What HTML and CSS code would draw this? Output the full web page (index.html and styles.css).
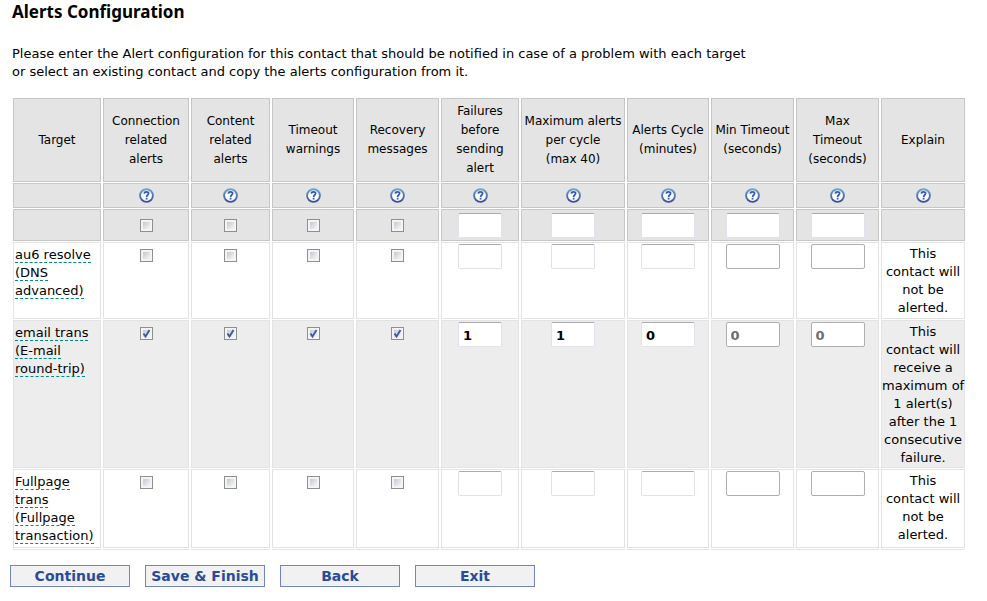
FILE: index.html
```html
<!DOCTYPE html>
<html lang="en">
<head>
  <meta charset="UTF-8">
  <title>Alerts Configuration</title>
  <link rel="stylesheet" href="styles.css">
</head>
<body>

  <svg class="symbols" aria-hidden="true">
    <defs>
      <linearGradient id="ring" x1="0" y1="0" x2="0" y2="1">
        <stop offset="0" stop-color="#6fa3cf"/>
        <stop offset="1" stop-color="#3b4f93"/>
      </linearGradient>
      <linearGradient id="disc" x1="0" y1="0" x2="0" y2="1">
        <stop offset="0" stop-color="#b5dcec"/>
        <stop offset="0.45" stop-color="#ffffff"/>
        <stop offset="1" stop-color="#f4f6fb"/>
      </linearGradient>
    </defs>
    <symbol id="help" viewBox="0 0 15 15">
      <circle cx="7.5" cy="7.5" r="6.4" fill="url(#disc)" stroke="url(#ring)" stroke-width="1.9"/>
      <path d="M5.4 5.6C5.5 4.3 6.5 3.9 7.5 3.9C8.8 3.9 9.6 4.6 9.6 5.6C9.6 7 7.6 7 7.6 8.9" fill="none" stroke="#3558b4" stroke-width="1.7"/>
      <rect x="6.7" y="9.8" width="1.8" height="1.7" fill="#3558b4"/>
    </symbol>
  </svg>

  <h1>Alerts Configuration</h1>

  <p class="intro">
    Please enter the Alert configuration for this contact that should be notified in case of a problem with each target<br>
    or select an existing contact and copy the alerts configuration from it.
  </p>

  <form>
    <table class="alerts">
      <colgroup>
        <col class="col-target">
        <col class="col-connection">
        <col class="col-content">
        <col class="col-timeout">
        <col class="col-recovery">
        <col class="col-failures">
        <col class="col-maximum">
        <col class="col-cycle">
        <col class="col-min">
        <col class="col-max">
        <col class="col-explain">
      </colgroup>
      <thead>
        <tr class="titles">
          <th>Target</th>
          <th>Connection<br>related<br>alerts</th>
          <th>Content<br>related<br>alerts</th>
          <th>Timeout<br>warnings</th>
          <th>Recovery<br>messages</th>
          <th>Failures<br>before<br>sending<br>alert</th>
          <th>Maximum alerts<br>per cycle<br>(max 40)</th>
          <th>Alerts Cycle<br>(minutes)</th>
          <th>Min Timeout<br>(seconds)</th>
          <th>Max<br>Timeout<br>(seconds)</th>
          <th>Explain</th>
        </tr>
        <tr class="help-row">
          <td></td>
          <td><button type="button" class="help" aria-label="Help: connection related alerts"><svg><use href="#help"/></svg></button></td>
          <td><button type="button" class="help" aria-label="Help: content related alerts"><svg><use href="#help"/></svg></button></td>
          <td><button type="button" class="help" aria-label="Help: timeout warnings"><svg><use href="#help"/></svg></button></td>
          <td><button type="button" class="help" aria-label="Help: recovery messages"><svg><use href="#help"/></svg></button></td>
          <td><button type="button" class="help" aria-label="Help: failures before sending alert"><svg><use href="#help"/></svg></button></td>
          <td><button type="button" class="help" aria-label="Help: maximum alerts per cycle"><svg><use href="#help"/></svg></button></td>
          <td><button type="button" class="help" aria-label="Help: alerts cycle"><svg><use href="#help"/></svg></button></td>
          <td><button type="button" class="help" aria-label="Help: min timeout"><svg><use href="#help"/></svg></button></td>
          <td><button type="button" class="help" aria-label="Help: max timeout"><svg><use href="#help"/></svg></button></td>
          <td><button type="button" class="help" aria-label="Help: explain"><svg><use href="#help"/></svg></button></td>
        </tr>
        <tr class="all-row">
          <td></td>
          <td><input type="checkbox" aria-label="All targets: connection related alerts"></td>
          <td><input type="checkbox" aria-label="All targets: content related alerts"></td>
          <td><input type="checkbox" aria-label="All targets: timeout warnings"></td>
          <td><input type="checkbox" aria-label="All targets: recovery messages"></td>
          <td><input type="text" class="short" aria-label="All targets: failures before sending alert"></td>
          <td><input type="text" class="short" aria-label="All targets: maximum alerts per cycle"></td>
          <td><input type="text" aria-label="All targets: alerts cycle"></td>
          <td><input type="text" aria-label="All targets: min timeout"></td>
          <td><input type="text" aria-label="All targets: max timeout"></td>
          <td></td>
        </tr>
      </thead>
      <tbody>
        <tr>
          <td class="target"><span>au6 resolve (DNS advanced)</span></td>
          <td><input type="checkbox" aria-label="au6 resolve: connection related alerts"></td>
          <td><input type="checkbox" aria-label="au6 resolve: content related alerts"></td>
          <td><input type="checkbox" aria-label="au6 resolve: timeout warnings"></td>
          <td><input type="checkbox" aria-label="au6 resolve: recovery messages"></td>
          <td><input type="text" class="short" aria-label="au6 resolve: failures before sending alert"></td>
          <td><input type="text" class="short" aria-label="au6 resolve: maximum alerts per cycle"></td>
          <td><input type="text" aria-label="au6 resolve: alerts cycle"></td>
          <td><input type="text" disabled aria-label="au6 resolve: min timeout"></td>
          <td><input type="text" disabled aria-label="au6 resolve: max timeout"></td>
          <td class="explain">This<br>contact will<br>not be<br>alerted.</td>
        </tr>
        <tr class="active">
          <td class="target"><span>email trans (E-mail round-trip)</span></td>
          <td><input type="checkbox" checked aria-label="email trans: connection related alerts"></td>
          <td><input type="checkbox" checked aria-label="email trans: content related alerts"></td>
          <td><input type="checkbox" checked aria-label="email trans: timeout warnings"></td>
          <td><input type="checkbox" checked aria-label="email trans: recovery messages"></td>
          <td><input type="text" class="short" value="1" aria-label="email trans: failures before sending alert"></td>
          <td><input type="text" class="short" value="1" aria-label="email trans: maximum alerts per cycle"></td>
          <td><input type="text" value="0" aria-label="email trans: alerts cycle"></td>
          <td><input type="text" value="0" disabled aria-label="email trans: min timeout"></td>
          <td><input type="text" value="0" disabled aria-label="email trans: max timeout"></td>
          <td class="explain">This<br>contact will<br>receive a<br>maximum of<br>1 alert(s)<br>after the 1<br>consecutive<br>failure.</td>
        </tr>
        <tr>
          <td class="target"><span>Fullpage trans (Fullpage transaction)</span></td>
          <td><input type="checkbox" aria-label="Fullpage trans: connection related alerts"></td>
          <td><input type="checkbox" aria-label="Fullpage trans: content related alerts"></td>
          <td><input type="checkbox" aria-label="Fullpage trans: timeout warnings"></td>
          <td><input type="checkbox" aria-label="Fullpage trans: recovery messages"></td>
          <td><input type="text" class="short" aria-label="Fullpage trans: failures before sending alert"></td>
          <td><input type="text" class="short" aria-label="Fullpage trans: maximum alerts per cycle"></td>
          <td><input type="text" aria-label="Fullpage trans: alerts cycle"></td>
          <td><input type="text" disabled aria-label="Fullpage trans: min timeout"></td>
          <td><input type="text" disabled aria-label="Fullpage trans: max timeout"></td>
          <td class="explain">This<br>contact will<br>not be<br>alerted.</td>
        </tr>
      </tbody>
    </table>

    <div class="buttons">
      <button type="button">Continue</button>
      <button type="button">Save &amp; Finish</button>
      <button type="button">Back</button>
      <button type="button">Exit</button>
    </div>
  </form>

</body>
</html>
```
FILE: styles.css
```css
body {
  margin: 0;
  padding: 2px 20px 10px 11px;
  font-family: Verdana, "DejaVu Sans", sans-serif;
  font-size: 13px;
  line-height: 18px;
  background-color: #fff;
  color: #000;
}
.symbols {
  position: absolute;
  width: 0;
  height: 0;
}
h1 {
  margin: 0;
  padding-left: 1px;
  font-family: Tahoma, "Noto Sans", sans-serif;
  font-size: 17px;
  line-height: 20px;
}
.intro {
  margin: 23px 0 16px;
  padding-left: 1px;
}

/* alerts table */
.alerts {
  width: 100%;
  table-layout: fixed;
  border-collapse: separate;
  border-spacing: 2px 1px;
}
.col-target { width: 88px; }
.col-connection { width: 86px; }
.col-content { width: 79px; }
.col-timeout { width: 82px; }
.col-recovery { width: 83px; }
.col-failures { width: 78px; }
.col-maximum { width: 104px; }
.col-cycle { width: 82px; }
.col-min { width: 83px; }
.col-max { width: 83px; }
.col-explain { width: 84px; }
th,
td {
  box-sizing: border-box;
  padding: 1px;
  border: 1px solid #e3e3e3;
  text-align: center;
  vertical-align: top;
}
thead th,
thead td {
  background-color: #e4e4e4;
  border-color: #c6c6c6;
  vertical-align: middle;
}
th {
  padding: 0;
  font-size: 12px;
  font-weight: normal;
  line-height: 19px;
  white-space: nowrap;
}
.titles {
  height: 84px;
}
.help-row {
  height: 25px;
}
.all-row {
  height: 32px;
}
tbody tr {
  height: 77px;
}
.active td {
  background-color: #ededed;
}
tbody tr:last-child {
  height: 79px;
}
tbody tr:last-child td {
  box-shadow: 0 1px 0 #fff, 0 2px 0 #e3e3e3;
}
.target {
  padding-top: 3px;
  text-align: left;
}
.target span {
  border-bottom: 1px dashed #008b8b;
}
.explain {
  padding: 2px 0 0;
  white-space: nowrap;
}

/* controls */
input[type="text"] {
  box-sizing: border-box;
  display: block;
  width: 54px;
  height: 25px;
  margin: 0 auto;
  padding: 1px 4px 0;
  border: 1px solid #dfe2ea;
  border-top-color: #aaabb0;
  border-radius: 2px;
  background-color: #fff;
  color: #000;
  font: bold 13px Verdana, "DejaVu Sans", sans-serif;
}
input[type="text"].short {
  width: 44px;
}
input[type="text"]:disabled {
  border-color: #afafaf;
  color: #6d6d6d;
}
input[type="checkbox"] {
  appearance: none;
  box-sizing: border-box;
  display: block;
  width: 13px;
  height: 13px;
  margin: 5px auto;
  padding: 2px;
  border: 1px solid #8e8f8f;
  background: linear-gradient(135deg, #c3c8d2, #f6f6f6) content-box, #f4f4f4;
}
.all-row input[type="checkbox"] {
  margin: 0 auto;
}
input[type="checkbox"]:checked {
  background: url("data:image/svg+xml,%3Csvg xmlns='http://www.w3.org/2000/svg' viewBox='0 0 11 11'%3E%3Cpath d='M2.5 5.5L4.5 8.5L8.5 2' fill='none' stroke='%23405a9c' stroke-width='1.9'/%3E%3C/svg%3E") 0 0 / 11px 11px no-repeat padding-box, linear-gradient(135deg, #c3c8d2, #f6f6f6) content-box, #f4f4f4;
}
.help {
  display: block;
  width: 15px;
  height: 15px;
  margin: 0 auto;
  padding: 0;
  border: none;
  background: none;
  cursor: pointer;
}
.help svg {
  display: block;
  width: 15px;
  height: 15px;
}
.buttons {
  display: flex;
  flex-wrap: wrap;
  gap: 15px;
  margin: 16px 0 0 -1px;
}
.buttons button {
  width: 120px;
  height: 22px;
  padding: 0;
  border: 1px solid #7186be;
  background-color: #f1f1f1;
  color: #2a4a9c;
  font: bold 14px Verdana, "DejaVu Sans", sans-serif;
  cursor: pointer;
}
.buttons button:hover {
  background-color: #e2e6f2;
}
```
